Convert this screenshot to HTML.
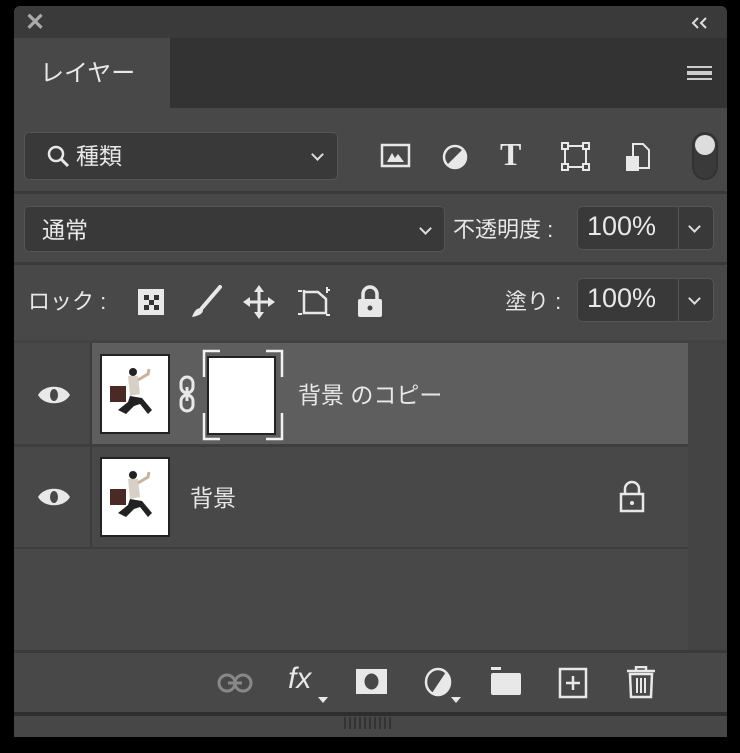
<!DOCTYPE html>
<html><head><meta charset="utf-8">
<style>
*{margin:0;padding:0;box-sizing:border-box}
body{width:740px;height:753px;background:#000;position:relative;overflow:hidden;font-family:"Liberation Sans","Noto Sans CJK JP",sans-serif;color:#e8e8e8}
.a{position:absolute}
.panel{left:14px;top:6px;width:713px;height:731px;background:#484848;border-radius:6px;overflow:hidden}
.box{background:#393939;border:1px solid #555;border-radius:5px}
.t{font-size:23px;white-space:nowrap}
svg{position:absolute}
</style></head><body>
<div class="a panel"></div>
<div class="a" style="left:14px;top:6px;width:713px;height:32px;background:#3a3a3a;border-radius:6px 6px 0 0"></div>
<div class="a t" style="left:25px;top:8px;font-size:24px;font-weight:bold;color:#aaa">✕</div>
<svg style="left:689px;top:16px" width="22" height="14"><path d="M9 2 L4 7 L9 12 M17 2 L12 7 L17 12" stroke="#ddd" stroke-width="2" fill="none"/></svg>
<div class="a" style="left:14px;top:38px;width:713px;height:70px;background:#333"></div>
<div class="a" style="left:14px;top:38px;width:156px;height:72px;background:#484848"></div>
<div class="a t" style="left:40px;top:53px;font-size:24px">レイヤー</div>
<div class="a" style="left:687px;top:66px;width:25px;height:14px;border-top:2px solid #ccc;border-bottom:2px solid #ccc"></div>
<div class="a" style="left:687px;top:71px;width:25px;height:4px;border-top:2px solid #ccc;border-bottom:2px solid #ccc"></div>
<div class="a box" style="left:24px;top:132px;width:314px;height:48px"></div>
<svg style="left:45px;top:143px" width="28" height="28"><circle cx="11" cy="11" r="7" stroke="#e8e8e8" stroke-width="2.5" fill="none"/><path d="M16 16 L23 23" stroke="#e8e8e8" stroke-width="3"/></svg>
<div class="a t" style="left:76px;top:137px">種類</div>
<div class="a" style="left:313px;top:150px;width:9px;height:9px;border-right:2px solid #ddd;border-bottom:2px solid #ddd;transform:rotate(45deg)"></div>
<svg style="left:380px;top:142px" width="32" height="28"><rect x="2" y="3" width="27" height="21" stroke="#e8e8e8" stroke-width="2.5" fill="none"/><path d="M7 20 L12 11 L15 16 L18 12 L24 20Z" fill="#e8e8e8"/></svg>
<svg style="left:440px;top:142px" width="30" height="30"><circle cx="15" cy="15" r="11" stroke="#e8e8e8" stroke-width="2.5" fill="none"/><path d="M23 7 A11 11 0 0 1 7 23Z" fill="#e8e8e8"/></svg>
<div class="a" style="left:500px;top:136px;font-size:32px;font-family:'Liberation Serif',serif;font-weight:bold;color:#e8e8e8">T</div>
<svg style="left:560px;top:141px" width="32" height="32"><rect x="5" y="5" width="21" height="21" stroke="#e8e8e8" stroke-width="2" fill="none"/><g fill="#484848" stroke="#e8e8e8" stroke-width="2"><rect x="2" y="2" width="6" height="6"/><rect x="23" y="2" width="6" height="6"/><rect x="2" y="23" width="6" height="6"/><rect x="23" y="23" width="6" height="6"/></g></svg>
<svg style="left:623px;top:142px" width="30" height="32"><path d="M10 2 H20 L26 8 V26 H10Z" stroke="#e8e8e8" stroke-width="2" fill="none"/><rect x="3" y="14" width="13" height="15" fill="#e8e8e8"/></svg>
<div class="a" style="left:692px;top:132px;width:26px;height:48px;border:2px solid #333;border-radius:13px;background:#3a3a3a"></div>
<div class="a" style="left:695px;top:135px;width:20px;height:20px;border-radius:50%;background:#ddd"></div>
<div class="a" style="left:14px;top:191px;width:713px;height:3px;background:#3a3a3a"></div>
<div class="a box" style="left:24px;top:206px;width:421px;height:46px"></div>
<div class="a t" style="left:42px;top:211px">通常</div>
<div class="a" style="left:421px;top:224px;width:9px;height:9px;border-right:2px solid #ddd;border-bottom:2px solid #ddd;transform:rotate(45deg)"></div>
<div class="a t" style="left:453px;top:212px;font-size:22px">不透明度 :</div>
<div class="a box" style="left:577px;top:206px;width:137px;height:44px"></div>
<div class="a" style="left:678px;top:207px;width:1px;height:42px;background:#555"></div>
<div class="a t" style="left:587px;top:211px;font-size:27px">100%</div>
<div class="a" style="left:690px;top:222px;width:9px;height:9px;border-right:2px solid #ddd;border-bottom:2px solid #ddd;transform:rotate(45deg)"></div>
<div class="a" style="left:14px;top:262px;width:713px;height:3px;background:#3a3a3a"></div>
<div class="a t" style="left:28px;top:284px;font-size:22px">ロック :</div>
<svg style="left:137px;top:288px" width="28" height="28"><rect x="1" y="1" width="26" height="26" fill="#e8e8e8"/><g fill="#333"><rect x="7" y="7" width="5" height="5"/><rect x="17" y="7" width="5" height="5"/><rect x="12" y="12" width="5" height="5"/><rect x="7" y="17" width="5" height="5"/><rect x="17" y="17" width="5" height="5"/></g></svg>
<svg style="left:188px;top:284px" width="36" height="36"><path d="M32 3 L14 24" stroke="#e8e8e8" stroke-width="4" stroke-linecap="round"/><path d="M13 24 C8 24 6 28 4 33 C10 32 15 30 15 26Z" fill="#e8e8e8"/></svg>
<svg style="left:242px;top:284px" width="34" height="36"><path d="M17 3 V33 M3 18 H31" stroke="#e8e8e8" stroke-width="3"/><path d="M17 1 L12 8 H22Z M17 35 L12 28 H22Z M1 18 L8 13 V23Z M33 18 L26 13 V23Z" fill="#e8e8e8"/></svg>
<svg style="left:296px;top:285px" width="36" height="34"><path d="M8 5 V28 H30 V14 L22 7 H8" stroke="#e8e8e8" stroke-width="2.5" fill="none"/><g stroke="#e8e8e8" stroke-width="2"><path d="M2 6H6 M30 5H34 M2 29H6 M30 30H34 M31 2V8"/></g></svg>
<svg style="left:355px;top:285px" width="30" height="34"><path d="M8 14 V9 A7 7 0 0 1 22 9 V14" stroke="#e8e8e8" stroke-width="3.5" fill="none"/><rect x="3" y="14" width="24" height="18" rx="2" fill="#e8e8e8"/><circle cx="15" cy="23" r="2.5" fill="#484848"/></svg>
<div class="a t" style="left:505px;top:284px;font-size:22px">塗り :</div>
<div class="a box" style="left:577px;top:278px;width:137px;height:44px"></div>
<div class="a" style="left:678px;top:279px;width:1px;height:42px;background:#555"></div>
<div class="a t" style="left:587px;top:283px;font-size:27px">100%</div>
<div class="a" style="left:690px;top:294px;width:9px;height:9px;border-right:2px solid #ddd;border-bottom:2px solid #ddd;transform:rotate(45deg)"></div>
<div class="a" style="left:14px;top:340px;width:713px;height:3px;background:#424242"></div>
<div class="a" style="left:688px;top:343px;width:39px;height:310px;background:#444"></div>
<div class="a" style="left:90px;top:343px;width:2px;height:206px;background:#3c3c3c"></div>
<div class="a" style="left:92px;top:343px;width:596px;height:101px;background:#5e5e5e"></div>
<div class="a" style="left:14px;top:444px;width:674px;height:3px;background:#3e3e3e"></div>
<div class="a" style="left:14px;top:547px;width:674px;height:2px;background:#3e3e3e"></div>
<svg style="left:36px;top:381px" width="36" height="28"><path d="M2 14 C8 3 28 3 34 14 C28 25 8 25 2 14Z" fill="#e8e8e8"/><ellipse cx="18" cy="14" rx="4" ry="6" fill="#484848"/></svg>
<svg style="left:36px;top:483px" width="36" height="28"><path d="M2 14 C8 3 28 3 34 14 C28 25 8 25 2 14Z" fill="#e8e8e8"/><ellipse cx="18" cy="14" rx="4" ry="6" fill="#484848"/></svg>
<svg style="left:100px;top:354px" width="70" height="80"><rect x="0" y="0" width="70" height="80" fill="#222"/><rect x="2" y="2" width="66" height="76" fill="#fff"/><g fill="#222"><circle cx="33" cy="18" r="4"/><path d="M28 22 L38 22 L40 40 L30 42Z" fill="#d8d0c4"/><rect x="10" y="32" width="16" height="16" fill="#4a2a22"/><path d="M30 42 L42 44 L52 56 L48 60 L40 50 L34 52 L26 60 L18 56 L28 48Z"/><path d="M38 26 L48 20 L49 15" stroke="#c9b39c" stroke-width="3" fill="none"/></g></svg>
<svg style="left:100px;top:457px" width="70" height="80"><rect x="0" y="0" width="70" height="80" fill="#222"/><rect x="2" y="2" width="66" height="76" fill="#fff"/><g fill="#222"><circle cx="33" cy="18" r="4"/><path d="M28 22 L38 22 L40 40 L30 42Z" fill="#d8d0c4"/><rect x="10" y="32" width="16" height="16" fill="#4a2a22"/><path d="M30 42 L42 44 L52 56 L48 60 L40 50 L34 52 L26 60 L18 56 L28 48Z"/><path d="M38 26 L48 20 L49 15" stroke="#c9b39c" stroke-width="3" fill="none"/></g></svg>
<svg style="left:176px;top:374px" width="22" height="40"><rect x="5" y="3" width="12" height="16" rx="6" stroke="#e8e8e8" stroke-width="3" fill="none"/><rect x="5" y="21" width="12" height="16" rx="6" stroke="#e8e8e8" stroke-width="3" fill="none"/><path d="M11 13 V27" stroke="#e8e8e8" stroke-width="3"/></svg>
<div class="a" style="left:207px;top:356px;width:69px;height:79px;background:#222"></div>
<div class="a" style="left:209px;top:358px;width:65px;height:75px;background:#fff"></div>
<svg style="left:202px;top:349px" width="82" height="92"><g stroke="#f2f2f2" stroke-width="2.5" fill="none"><path d="M18 2 H2 V28 M64 2 H80 V28 M2 64 V90 H18 M80 64 V90 H64"/></g></svg>
<div class="a t" style="left:298px;top:376px;font-size:23px">背景 のコピー</div>
<div class="a t" style="left:190px;top:479px;font-size:23px">背景</div>
<svg style="left:618px;top:480px" width="28" height="34"><path d="M7 14 V9 A7 7 0 0 1 21 9 V14" stroke="#e8e8e8" stroke-width="2.5" fill="none"/><rect x="3" y="14" width="22" height="17" stroke="#e8e8e8" stroke-width="2.5" fill="none"/><circle cx="14" cy="23" r="2" fill="#e8e8e8"/></svg>
<div class="a" style="left:14px;top:650px;width:713px;height:3px;background:#3a3a3a"></div>
<svg style="left:216px;top:670px" width="38" height="26"><rect x="3" y="5" width="16" height="16" rx="8" stroke="#888" stroke-width="3" fill="none"/><rect x="19" y="5" width="16" height="16" rx="8" stroke="#888" stroke-width="3" fill="none"/><path d="M12 13 H26" stroke="#888" stroke-width="3"/></svg>
<div class="a" style="left:288px;top:662px;font-size:30px;font-style:italic;color:#e8e8e8;font-family:'Liberation Sans',sans-serif">fx</div>
<div class="a" style="left:318px;top:697px;width:0;height:0;border-left:5px solid transparent;border-right:5px solid transparent;border-top:6px solid #e8e8e8"></div>
<svg style="left:356px;top:669px" width="32" height="26"><rect x="0" y="0" width="31" height="25" fill="#e8e8e8"/><ellipse cx="15.5" cy="12.5" rx="7" ry="8" fill="#484848"/></svg>
<svg style="left:424px;top:667px" width="34" height="30"><ellipse cx="14" cy="15" rx="12" ry="13" stroke="#e8e8e8" stroke-width="2.5" fill="none"/><path d="M22 5 A12 13 0 0 1 8 26Z" fill="#e8e8e8"/></svg>
<div class="a" style="left:451px;top:697px;width:0;height:0;border-left:5px solid transparent;border-right:5px solid transparent;border-top:6px solid #e8e8e8"></div>
<svg style="left:489px;top:667px" width="34" height="30"><rect x="2" y="0" width="10" height="3" fill="#e8e8e8"/><rect x="2" y="6" width="30" height="22" rx="2" fill="#e8e8e8"/></svg>
<svg style="left:557px;top:667px" width="34" height="34"><rect x="3" y="2" width="26" height="28" stroke="#e8e8e8" stroke-width="2.5" fill="none"/><path d="M16 9 V23 M9 16 H23" stroke="#e8e8e8" stroke-width="2.5"/></svg>
<svg style="left:625px;top:666px" width="32" height="34"><path d="M11 4 V1 H21 V4 M2 5 H30" stroke="#e8e8e8" stroke-width="2.5" fill="none"/><path d="M5 8 H27 L26 31 H6Z" stroke="#e8e8e8" stroke-width="2.5" fill="none"/><path d="M12 12 V27 M16 12 V27 M20 12 V27" stroke="#e8e8e8" stroke-width="2"/></svg>
<div class="a" style="left:14px;top:712px;width:713px;height:4px;background:#2e2e2e"></div>
<div class="a" style="left:14px;top:716px;width:713px;height:21px;background:#474747"></div>
<div class="a" style="left:344px;top:717px;width:48px;height:12px;background:repeating-linear-gradient(90deg,#333 0 2px,transparent 2px 5px)"></div>
</body></html>
